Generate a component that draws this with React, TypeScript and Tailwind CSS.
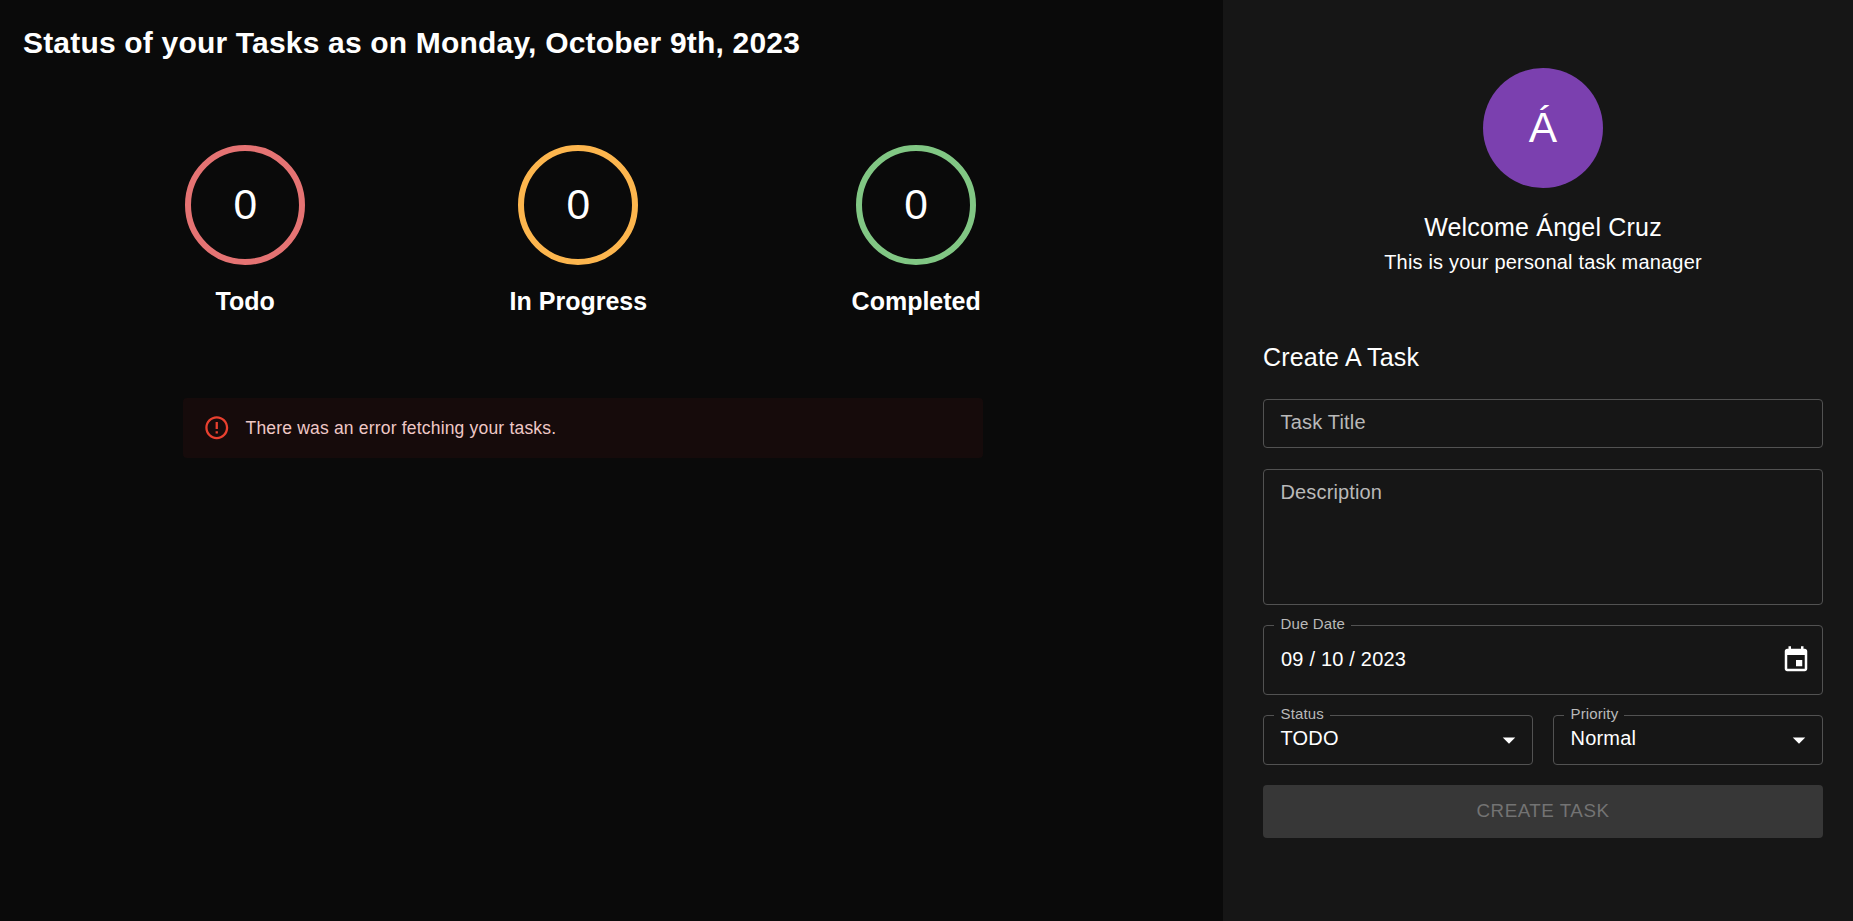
import React from 'react';

const counters = [
  { label: 'Todo', count: 0, ring: 'border-[#e57373]' },
  { label: 'In Progress', count: 0, ring: 'border-[#fdb64e]' },
  { label: 'Completed', count: 0, ring: 'border-[#81c784]' },
];

function FieldLabel({ children }: { children: React.ReactNode }) {
  return (
    <span className="absolute -top-[14px] left-[10px] bg-[#161616] pr-[6px] pl-[6.5px] text-[15px] leading-[24px] tracking-[0.14px] whitespace-nowrap text-[#b9b9b9]">
      {children}
    </span>
  );
}

function SelectField({ label, value }: { label: string; value: string }) {
  return (
    <div className="relative flex h-[50px] flex-1 items-start justify-between rounded-[4px] border border-[#525252] pl-[16.5px]">
      <FieldLabel>{label}</FieldLabel>
      <span className="mt-[8px] text-[20px] leading-[29px] tracking-[0.188px]">{value}</span>
      <svg viewBox="0 0 24 24" className="mt-[9px] mr-[8px] size-[30px]" fill="currentColor">
        <path d="M7 10l5 5 5-5z" />
      </svg>
    </div>
  );
}

export default function App() {
  return (
    <div className="flex h-[921px] w-[1853px] overflow-hidden bg-[#0a0a0a] font-['Liberation_Sans',Arial,sans-serif] text-white">
      <main className="flex w-[1223px] flex-col">
        <h1 className="pt-[23px] pl-[23px] text-[30px] leading-[40px] font-bold tracking-[0.185px]">
          Status of your Tasks as on Monday, October 9th, 2023
        </h1>
        <div className="mt-[82px] ml-[83px] flex w-[1000px] justify-around">
          {counters.map((c) => (
            <div key={c.label} className="flex flex-col items-center">
              <div className={`flex size-[120px] items-center justify-center rounded-full border-[6px] ${c.ring}`}>
                <span className="text-[42.5px] leading-[52px]">{c.count}</span>
              </div>
              <h2 className="mt-[16px] text-[25px] leading-[40px] font-bold">{c.label}</h2>
            </div>
          ))}
        </div>
        <div className="mt-[77px] ml-[183px] flex h-[60px] w-[800px] items-center rounded-[4px] bg-[#160b0b] pl-[20px]">
          <svg viewBox="0 0 24 24" className="size-[27.5px] text-[#e8402f]" fill="currentColor">
            <path d="M11 15h2v2h-2zm0-8h2v6h-2zm.99-5C6.47 2 2 6.48 2 12s4.47 10 9.99 10C17.52 22 22 17.52 22 12S17.52 2 11.99 2zM12 20c-4.42 0-8-3.58-8-8s3.58-8 8-8 8 3.58 8 8-3.58 8-8 8z" />
          </svg>
          <span className="ml-[15px] text-[17.5px] leading-[25px] tracking-[0.187px] text-[#efc8c6]">
            There was an error fetching your tasks.
          </span>
        </div>
      </main>

      <aside className="flex w-[630px] flex-col bg-[#161616] pt-[68px] pr-[30px] pl-[40px]">
        <div className="flex flex-col items-center">
          <div className="flex size-[120px] items-center justify-center rounded-full bg-[#7b40af]">
            <span className="text-[42.5px] leading-[52px] tracking-[0.31px]">Á</span>
          </div>
          <h2 className="mt-[19px] text-[25px] leading-[40px] tracking-[0.1875px]">Welcome Ángel Cruz</h2>
          <p className="text-[20px] leading-[30px] tracking-[0.188px]">This is your personal task manager</p>
        </div>
        <h3 className="mt-[60px] text-[25px] leading-[40px] tracking-[0.1875px]">Create A Task</h3>
        <div className="mt-[22px] h-[49px] rounded-[4px] border border-[#525252] pt-[8px] pl-[16.5px] text-[20px] leading-[29px] tracking-[0.188px] text-[#b9b9b9]">
          Task Title
        </div>
        <div className="mt-[21px] h-[136px] rounded-[4px] border border-[#525252] pt-[8px] pl-[16.5px] text-[20px] leading-[29px] tracking-[0.14px] text-[#b9b9b9]">
          Description
        </div>
        <div className="relative mt-[20px] flex h-[70px] items-center justify-between rounded-[4px] border border-[#525252] pr-[11px] pl-[17px]">
          <FieldLabel>Due Date</FieldLabel>
          <span className="pb-[2px] text-[20px] leading-[29px] tracking-[0.2px]">09 / 10 / 2023</span>
          <svg viewBox="0 0 24 24" className="size-[30px]" fill="currentColor">
            <path d="M17 12h-5v5h5v-5zM16 1v2H8V1H6v2H5c-1.11 0-1.99.9-1.99 2L3 19c0 1.1.89 2 2 2h14c1.1 0 2-.9 2-2V5c0-1.1-.9-2-2-2h-1V1h-2zm3 18H5V8h14v11z" />
          </svg>
        </div>
        <div className="mt-[20px] flex gap-[20px]">
          <SelectField label="Status" value="TODO" />
          <SelectField label="Priority" value="Normal" />
        </div>
        <button className="mt-[20px] h-[53px] rounded-[4px] bg-[#373737] text-[18.75px] tracking-[0.536px] text-[#737373]">
          CREATE TASK
        </button>
      </aside>
    </div>
  );
}
